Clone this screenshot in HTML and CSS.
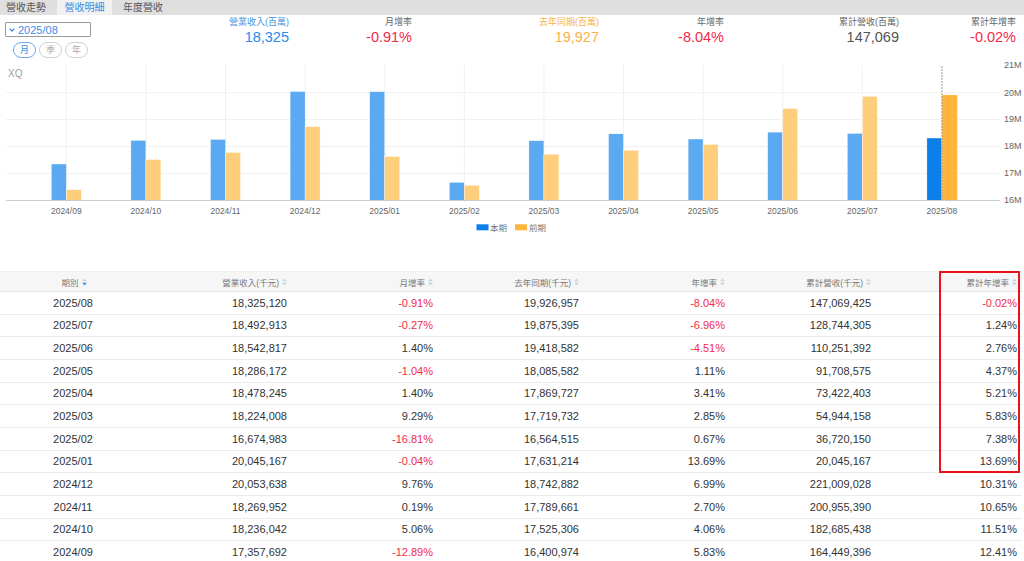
FILE: index.html
```html
<!DOCTYPE html>
<html lang="zh-Hant">
<head>
<meta charset="utf-8">
<title>營收明細</title>
<link rel="stylesheet" href="styles.css">
</head>
<body>
<div class="tabs">
  <div class="tab t1">營收走勢</div>
  <div class="tab t2 active">營收明細</div>
  <div class="tab t3">年度營收</div>
</div>

<div class="top">
  <div class="controls">
    <div class="select">
      <svg class="chev" width="6" height="4" viewBox="0 0 6 4"><path d="M0.6 0.6 L3 3 L5.4 0.6" fill="none" stroke="#3b8de6" stroke-width="1.3"/></svg>
      <span>2025/08</span>
    </div>
    <div class="periods">
      <span class="pill active">月</span>
      <span class="pill">季</span>
      <span class="pill">年</span>
    </div>
  </div>
  <div class="summary">
    <div class="stat"><div class="lbl c-blue">營業收入(百萬)</div><div class="val c-blue">18,325</div></div>
    <div class="stat"><div class="lbl">月增率</div><div class="val c-red">-0.91%</div></div>
    <div class="stat"><div class="lbl c-orange">去年同期(百萬)</div><div class="val c-orange">19,927</div></div>
    <div class="stat"><div class="lbl">年增率</div><div class="val c-red">-8.04%</div></div>
    <div class="stat"><div class="lbl">累計營收(百萬)</div><div class="val c-gray">147,069</div></div>
    <div class="stat"><div class="lbl">累計年增率</div><div class="val c-red">-0.02%</div></div>
  </div>
</div>

<svg class="chart" width="1024" height="213" viewBox="0 58 1024 213">
  <text class="xq" x="8" y="77">XQ</text>
  <g class="grid">
    <line x1="6" x2="1000" y1="92.7" y2="92.7"/>
    <line x1="6" x2="1000" y1="119.6" y2="119.6"/>
    <line x1="6" x2="1000" y1="146.5" y2="146.5"/>
    <line x1="6" x2="1000" y1="173.4" y2="173.4"/>
    <line x1="66.3" x2="66.3" y1="65" y2="200"/>
    <line x1="145.9" x2="145.9" y1="65" y2="200"/>
    <line x1="225.5" x2="225.5" y1="65" y2="200"/>
    <line x1="305.1" x2="305.1" y1="65" y2="200"/>
    <line x1="384.7" x2="384.7" y1="65" y2="200"/>
    <line x1="464.3" x2="464.3" y1="65" y2="200"/>
    <line x1="543.9" x2="543.9" y1="65" y2="200"/>
    <line x1="623.5" x2="623.5" y1="65" y2="200"/>
    <line x1="703.1" x2="703.1" y1="65" y2="200"/>
    <line x1="782.7" x2="782.7" y1="65" y2="200"/>
    <line x1="862.3" x2="862.3" y1="65" y2="200"/>
  </g>
  <g class="bars">
    <rect class="b" x="51.3" y="164" width="15" height="36.5"/><rect class="o" x="66.3" y="189.7" width="15" height="10.8"/>
    <rect class="b" x="130.9" y="140.4" width="15" height="60.1"/><rect class="o" x="145.9" y="159.5" width="15" height="41"/>
    <rect class="b" x="210.5" y="139.4" width="15" height="61.1"/><rect class="o" x="225.5" y="152.4" width="15" height="48.1"/>
    <rect class="b" x="290.1" y="91.5" width="15" height="109"/><rect class="o" x="305.1" y="126.7" width="15" height="73.8"/>
    <rect class="b" x="369.7" y="91.7" width="15" height="108.8"/><rect class="o" x="384.7" y="156.6" width="15" height="43.9"/>
    <rect class="b" x="449.3" y="182.3" width="15" height="18.2"/><rect class="o" x="464.3" y="185.3" width="15" height="15.2"/>
    <rect class="b" x="528.9" y="140.7" width="15" height="59.8"/><rect class="o" x="543.9" y="154.2" width="15" height="46.3"/>
    <rect class="b" x="608.5" y="133.8" width="15" height="66.7"/><rect class="o" x="623.5" y="150.2" width="15" height="50.3"/>
    <rect class="b" x="688.1" y="139" width="15" height="61.5"/><rect class="o" x="703.1" y="144.4" width="15" height="56.1"/>
    <rect class="b" x="767.7" y="132.1" width="15" height="68.4"/><rect class="o" x="782.7" y="108.5" width="15" height="92"/>
    <rect class="b" x="847.3" y="133.4" width="15" height="67.1"/><rect class="o" x="862.3" y="96.3" width="15" height="104.2"/>
    <rect class="bs" x="926.9" y="138" width="15" height="62.5"/><rect class="os" x="941.9" y="94.9" width="15.5" height="105.6"/>
  </g>
  <line class="cross" x1="941.9" x2="941.9" y1="66" y2="200"/>
  <line class="axis" x1="6" x2="1000" y1="200.5" y2="200.5"/>
  <g class="ylab">
    <text x="1004" y="68">21M</text>
    <text x="1004" y="95.5">20M</text>
    <text x="1004" y="122">19M</text>
    <text x="1004" y="149">18M</text>
    <text x="1004" y="176">17M</text>
    <text x="1004" y="203">16M</text>
  </g>
  <g class="xlab">
    <text x="66.3" y="214">2024/09</text>
    <text x="145.9" y="214">2024/10</text>
    <text x="225.5" y="214">2024/11</text>
    <text x="305.1" y="214">2024/12</text>
    <text x="384.7" y="214">2025/01</text>
    <text x="464.3" y="214">2025/02</text>
    <text x="543.9" y="214">2025/03</text>
    <text x="623.5" y="214">2025/04</text>
    <text x="703.1" y="214">2025/05</text>
    <text x="782.7" y="214">2025/06</text>
    <text x="862.3" y="214">2025/07</text>
    <text x="941.9" y="214">2025/08</text>
  </g>
  <g class="legend">
    <rect class="bs" x="476.5" y="224.3" width="12" height="6"/>
    <text x="490" y="230.5">本期</text>
    <rect class="os" x="515" y="224.3" width="12" height="6"/>
    <text x="529" y="230.5">前期</text>
  </g>
</svg>

<div class="table">
  <div class="row head">
    <div class="cell first">期別<svg class="sort" width="5" height="8" viewBox="0 0 5 8"><path d="M2.5 0.5 L4.8 3.2 L0.2 3.2Z" fill="#c5d3e0"/><path d="M0.2 4.8 L4.8 4.8 L2.5 7.5Z" fill="#3b8de6"/></svg></div>
    <div class="cell">營業收入(千元)<svg class="sort" width="5" height="8" viewBox="0 0 5 8"><path d="M2.5 0.5 L4.8 3.2 L0.2 3.2Z" fill="#c5d3e0"/><path d="M0.2 4.8 L4.8 4.8 L2.5 7.5Z" fill="#c5d3e0"/></svg></div>
    <div class="cell">月增率<svg class="sort" width="5" height="8" viewBox="0 0 5 8"><path d="M2.5 0.5 L4.8 3.2 L0.2 3.2Z" fill="#c5d3e0"/><path d="M0.2 4.8 L4.8 4.8 L2.5 7.5Z" fill="#c5d3e0"/></svg></div>
    <div class="cell">去年同期(千元)<svg class="sort" width="5" height="8" viewBox="0 0 5 8"><path d="M2.5 0.5 L4.8 3.2 L0.2 3.2Z" fill="#c5d3e0"/><path d="M0.2 4.8 L4.8 4.8 L2.5 7.5Z" fill="#c5d3e0"/></svg></div>
    <div class="cell">年增率<svg class="sort" width="5" height="8" viewBox="0 0 5 8"><path d="M2.5 0.5 L4.8 3.2 L0.2 3.2Z" fill="#c5d3e0"/><path d="M0.2 4.8 L4.8 4.8 L2.5 7.5Z" fill="#c5d3e0"/></svg></div>
    <div class="cell">累計營收(千元)<svg class="sort" width="5" height="8" viewBox="0 0 5 8"><path d="M2.5 0.5 L4.8 3.2 L0.2 3.2Z" fill="#c5d3e0"/><path d="M0.2 4.8 L4.8 4.8 L2.5 7.5Z" fill="#c5d3e0"/></svg></div>
    <div class="cell">累計年增率<svg class="sort" width="5" height="8" viewBox="0 0 5 8"><path d="M2.5 0.5 L4.8 3.2 L0.2 3.2Z" fill="#c5d3e0"/><path d="M0.2 4.8 L4.8 4.8 L2.5 7.5Z" fill="#c5d3e0"/></svg></div>
  </div>
  <div class="row"><div class="cell first">2025/08</div><div class="cell">18,325,120</div><div class="cell neg">-0.91%</div><div class="cell">19,926,957</div><div class="cell neg">-8.04%</div><div class="cell">147,069,425</div><div class="cell neg">-0.02%</div></div>
  <div class="row"><div class="cell first">2025/07</div><div class="cell">18,492,913</div><div class="cell neg">-0.27%</div><div class="cell">19,875,395</div><div class="cell neg">-6.96%</div><div class="cell">128,744,305</div><div class="cell">1.24%</div></div>
  <div class="row"><div class="cell first">2025/06</div><div class="cell">18,542,817</div><div class="cell">1.40%</div><div class="cell">19,418,582</div><div class="cell neg">-4.51%</div><div class="cell">110,251,392</div><div class="cell">2.76%</div></div>
  <div class="row"><div class="cell first">2025/05</div><div class="cell">18,286,172</div><div class="cell neg">-1.04%</div><div class="cell">18,085,582</div><div class="cell">1.11%</div><div class="cell">91,708,575</div><div class="cell">4.37%</div></div>
  <div class="row"><div class="cell first">2025/04</div><div class="cell">18,478,245</div><div class="cell">1.40%</div><div class="cell">17,869,727</div><div class="cell">3.41%</div><div class="cell">73,422,403</div><div class="cell">5.21%</div></div>
  <div class="row"><div class="cell first">2025/03</div><div class="cell">18,224,008</div><div class="cell">9.29%</div><div class="cell">17,719,732</div><div class="cell">2.85%</div><div class="cell">54,944,158</div><div class="cell">5.83%</div></div>
  <div class="row"><div class="cell first">2025/02</div><div class="cell">16,674,983</div><div class="cell neg">-16.81%</div><div class="cell">16,564,515</div><div class="cell">0.67%</div><div class="cell">36,720,150</div><div class="cell">7.38%</div></div>
  <div class="row"><div class="cell first">2025/01</div><div class="cell">20,045,167</div><div class="cell neg">-0.04%</div><div class="cell">17,631,214</div><div class="cell">13.69%</div><div class="cell">20,045,167</div><div class="cell">13.69%</div></div>
  <div class="row"><div class="cell first">2024/12</div><div class="cell">20,053,638</div><div class="cell">9.76%</div><div class="cell">18,742,882</div><div class="cell">6.99%</div><div class="cell">221,009,028</div><div class="cell">10.31%</div></div>
  <div class="row"><div class="cell first">2024/11</div><div class="cell">18,269,952</div><div class="cell">0.19%</div><div class="cell">17,789,661</div><div class="cell">2.70%</div><div class="cell">200,955,390</div><div class="cell">10.65%</div></div>
  <div class="row"><div class="cell first">2024/10</div><div class="cell">18,236,042</div><div class="cell">5.06%</div><div class="cell">17,525,306</div><div class="cell">4.06%</div><div class="cell">182,685,438</div><div class="cell">11.51%</div></div>
  <div class="row"><div class="cell first">2024/09</div><div class="cell">17,357,692</div><div class="cell neg">-12.89%</div><div class="cell">16,400,974</div><div class="cell">5.83%</div><div class="cell">164,449,396</div><div class="cell">12.41%</div></div>
  <div class="highlight"></div>
</div>
</body>
</html>
```

FILE: styles.css
```css
html, body {
  margin: 0;
  padding: 0;
  overflow: hidden;
  background: #ffffff;
}
body {
  width: 1024px;
  height: 561px;
  font-family: "Liberation Sans", "Noto Sans CJK TC", sans-serif;
  color: #333333;
}

/* tabs */
.tabs {
  display: flex;
  height: 15px;
  background: #dfdfdf;
}
.tab {
  font-size: 10px;
  line-height: 15px;
  text-align: center;
  color: #555555;
}
.t1 { width: 52px; margin-right: 5px; }
.t2 { width: 55px; }
.t3 { width: 62px; }
.tab.active {
  background: #f1f1f1;
  color: #3b8de6;
}

/* top area */
.top {
  display: flex;
  height: 43px;
}
.controls {
  width: 110px;
  display: flex;
  flex-direction: column;
}
.select {
  margin: 7px 0 0 5px;
  width: 86px;
  height: 15px;
  box-sizing: border-box;
  border: 1px solid #9a9a9a;
  border-radius: 1px;
  display: flex;
  align-items: center;
  gap: 3px;
  padding-left: 3px;
  font-size: 11px;
  color: #3b8de6;
}
.chev { flex: none; }
.periods {
  display: flex;
  gap: 3px;
  margin: 5px 0 0 13px;
}
.pill {
  width: 23px;
  height: 16px;
  box-sizing: border-box;
  border: 1px solid #cfcfcf;
  border-radius: 8px;
  font-size: 9px;
  line-height: 14px;
  text-align: center;
  color: #aaaaaa;
}
.pill.active {
  border-color: #6eaaea;
  color: #3b8de6;
}

.summary {
  display: grid;
  grid-template-columns: 179px 123px 187px 125px 175px 117px;
}
.stat {
  text-align: right;
}
.lbl {
  font-size: 9px;
  line-height: 14px;
  color: #666666;
}
.val {
  font-size: 14.5px;
  line-height: 16px;
}
.c-blue { color: #2a8ae8; }
.lbl.c-blue { color: #4a95e0; }
.c-orange { color: #f8b24a; }
.c-red { color: #f02b4a; }
.c-gray { color: #555555; }

/* chart */
.chart {
  display: block;
}
.xq {
  font-size: 10px;
  fill: #a0a0a0;
}
.grid line {
  stroke: #f0f0f0;
  stroke-width: 1;
}
.axis {
  stroke: #cccccc;
  stroke-width: 1;
}
.cross {
  stroke: #9a9a9a;
  stroke-width: 1;
  stroke-dasharray: 2 1;
}
.bars rect {
  stroke: #ffffff;
  stroke-width: 0.4;
}
.b { fill: #5ba9f1; }
.o { fill: #ffce7d; }
.bs { fill: #0b7fea; }
.os { fill: #ffb43b; }
.ylab text {
  font-size: 9px;
  fill: #666666;
}
.xlab text {
  font-size: 8.5px;
  fill: #666666;
  text-anchor: middle;
}
.legend text {
  font-size: 8.5px;
  fill: #777777;
}

/* table */
.table {
  position: relative;
  width: 1022px;
}
.row {
  display: grid;
  grid-template-columns: repeat(7, 146px);
  height: 22.67px;
  box-sizing: border-box;
  border-bottom: 1px solid #ebebeb;
  align-items: center;
}
.row.head {
  height: 21px;
  background: #f6f6f6;
  border-top: 1px solid #f0f0f0;
  border-bottom: 1px solid #e6e6e6;
}
.cell {
  font-size: 11px;
  text-align: right;
  padding-right: 5px;
  white-space: nowrap;
}
.cell.first {
  text-align: center;
  padding-right: 0;
}
.head .cell {
  font-size: 8.5px;
  color: #777777;
  display: flex;
  justify-content: flex-end;
  align-items: center;
  gap: 3px;
}
.head .cell.first {
  justify-content: center;
  padding-left: 2px;
}
.sort { flex: none; }
.neg { color: #f02b4a; }

.highlight {
  position: absolute;
  left: 939px;
  top: 0;
  width: 81px;
  height: 202px;
  box-sizing: border-box;
  border: 2px solid #e8141b;
}
```
